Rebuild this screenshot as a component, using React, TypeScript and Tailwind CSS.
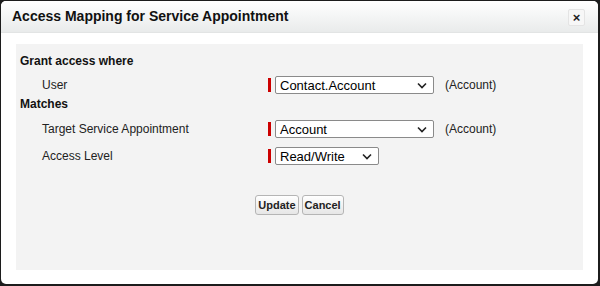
import React from "react"

const Chevron = () => (
    <svg width="10" height="7" viewBox="0 0 10 7" className="shrink-0">
        <path d="M1 1.5 L5 5.5 L9 1.5" fill="none" stroke="#222" strokeWidth="1.6" />
    </svg>
)

const Select = ({ value, width }: { value: string; width: string }) => (
    <div className="flex items-center gap-1">
        <span className="w-[3px] h-[14px] bg-[#cc0000]" />
        <div className={`${width} h-[18px] flex items-center justify-between pl-[4px] pr-[6px] bg-white border border-[#8a8a8a] rounded-[2px] text-[13px] text-black leading-none`}>
            <span>{value}</span>
            <Chevron />
        </div>
    </div>
)

const Row = ({ label, children }: { label: string; children: React.ReactNode }) => (
    <div className="flex items-center h-[22px]">
        <div className="w-[248px] pl-[22px] text-[12px] text-[#222]">{label}</div>
        {children}
    </div>
)

export default function App() {
    return (
        <div className="w-[600px] h-[286px] bg-[#1c1c1c] pt-px pl-px pr-[2px] pb-[2px] font-['Liberation_Sans',Arial,sans-serif]">
            <div className="w-full h-full bg-white rounded-[5px] overflow-hidden flex flex-col">
                <div className="h-[32px] flex items-center justify-between pl-[11px] pr-[13px] bg-gradient-to-b from-white to-[#e9ebeb] border-b border-[#e2e4e4]">
                    <h2 className="text-[14px] font-bold text-[#111]">Access Mapping for Service Appointment</h2>
                    <button className="w-[17px] h-[17px] mt-[2px] flex items-center justify-center bg-[#f7f7f7] border border-[#e4e4e4] rounded-[2px] text-[13px] font-bold text-[#222] leading-none">
                        ×
                    </button>
                </div>

                <div className="flex-1 px-[15px] pt-[11px] pb-[14px]">
                    <div className="h-full bg-[#f3f3f3] pl-[4px] pt-[8px]">
                        <div className="h-[18px] flex items-center text-[12px] font-bold text-[#111]">Grant access where</div>
                        <div className="mt-[4px]">
                            <Row label="User">
                                <Select value="Contact.Account" width="w-[159px]" />
                                <span className="ml-[11px] text-[12px] text-[#222]">(Account)</span>
                            </Row>
                        </div>
                        <div className="h-[16px] flex items-center text-[12px] font-bold text-[#111]">Matches</div>
                        <div className="mt-[6px] flex flex-col gap-[5px]">
                            <Row label="Target Service Appointment">
                                <Select value="Account" width="w-[159px]" />
                                <span className="ml-[11px] text-[12px] text-[#222]">(Account)</span>
                            </Row>
                            <Row label="Access Level">
                                <Select value="Read/Write" width="w-[104px]" />
                            </Row>
                        </div>
                        <div className="mt-[28px] flex justify-center gap-[3px] pr-[4px]">
                            <button className="h-[20px] px-[2px] bg-gradient-to-b from-white to-[#e6e6e6] border border-[#b5b5b5] rounded-[3px] text-[11px] font-bold text-[#222]">
                                Update
                            </button>
                            <button className="h-[20px] px-[2px] bg-gradient-to-b from-white to-[#e6e6e6] border border-[#b5b5b5] rounded-[3px] text-[11px] font-bold text-[#222]">
                                Cancel
                            </button>
                        </div>
                    </div>
                </div>
            </div>
        </div>
    )
}
